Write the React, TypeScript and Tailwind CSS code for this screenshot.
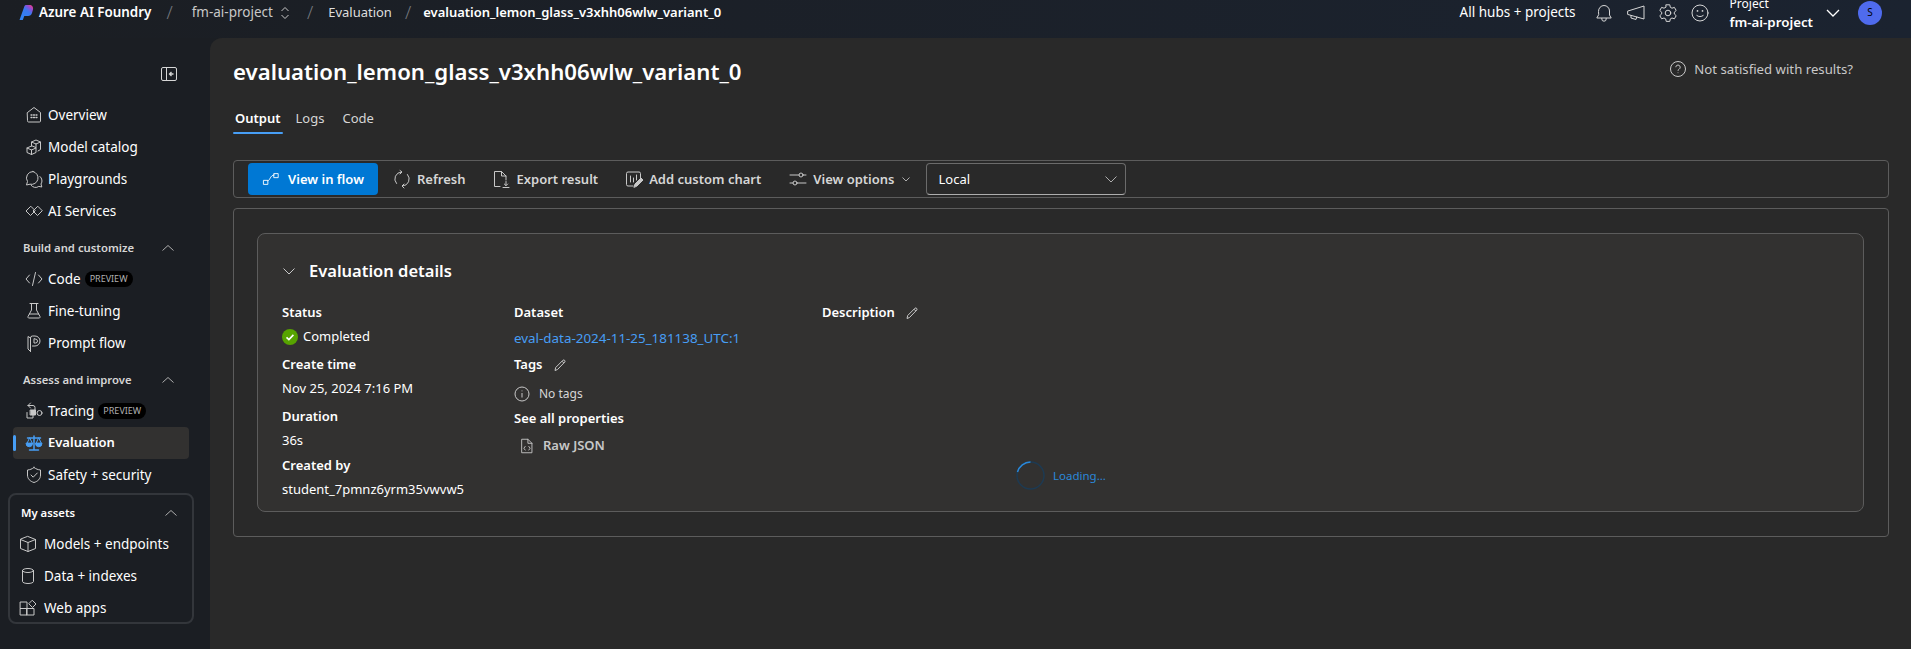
import React from "react";

const font = "font-['Noto_Sans',sans-serif]";

function Ic({ s = 20, className = "", children }: { s?: number; className?: string; children: React.ReactNode }) {
  return (
    <svg width={s} height={s} viewBox="0 0 20 20" fill="none" stroke="currentColor" strokeWidth={1} strokeLinecap="round" strokeLinejoin="round" className={"shrink-0 " + className}>
      {children}
    </svg>
  );
}

const icons: Record<string, React.ReactNode> = {
  home: <><path d="M3.500 7.500 10 2.500l6.500 5v8.500a1 1 0 0 1-1 1h-11a1 1 0 0 1-1-1z" /><path d="M7 10h1M9.500 10h1M12 10h1M7 12.500h1M9.500 12.500h1M12 12.500h1" strokeWidth={1.300} /></>,
  catalog: <><path d="M7.500 9 3 11v4.500l4.500 2 4.500-2V11z" /><path d="m3 11 4.500 2 4.500-2M7.500 13v4.500" /><path d="M7.500 9V5l4.500-2 4.500 2v7.500l-2.500 1.500" /><path d="m7.500 5 4.500 2 4.500-2M12 7v3" /></>,
  play: <><path d="M9 2.500a6.500 6.500 0 0 0-5.500 10L2.500 16l3.500-.8A6.500 6.500 0 1 0 9 2.500z" /><path d="M16 7.500a5.500 5.500 0 0 1 1 7.500l.8 3-3-.6a5.500 5.500 0 0 1-7.800-1.200" /></>,
  ai: <><path d="M6.500 5.500 2 10l4.500 4.500L11 10z" /><path d="M13.500 5.500 9 10l4.500 4.500L18 10z" /></>,
  code: <><path d="m5.500 6-3.500 4 3.500 4M14.500 6l3.500 4-3.500 4M11.500 3.500l-3 13" /></>,
  flask: <><path d="M6 2.500h8M7.500 2.500V9l-3.500 6.500a1 1 0 0 0 .9 1.500h10.200a1 1 0 0 0 .9-1.500L12.500 9V2.500M5.500 13h9" /></>,
  flow: <><path d="M6.500 18.500V5a2 2 0 0 1 2-2h2.500a5 5 0 0 1 0 10H8.500" /><path d="M6.500 5 4 3.500v12.500l2.500 2.500M10 6v4h1.500a2 2 0 0 0 0-4z" /></>,
  trace: <><path d="M6.500 2 4 4.500 6.500 7M4 4.500h5a2 2 0 0 1 2 2V9" /><rect x="6.500" y="9" width="5" height="5" fill="currentColor" /><path d="M3 11.500V17h6v-3" /><circle cx="15.500" cy="12" r="2.500" /></>,
  scale: <><path d="M10 3v13.500M5.500 17h9M3.500 5h13" strokeWidth={1.500} /><path d="M5.500 5 3 10.500h5zM14.500 5 12 10.500h5z" /><path d="M2 10.500a3 3 0 0 0 6.500 0zM11.500 10.500a3 3 0 0 0 6.500 0z" fill="currentColor" /></>,
  shield: <><path d="M10 2.500c2 1.500 4 2.300 6.500 2.500v5c0 3.800-2.500 6.300-6.500 7.500-4-1.200-6.500-3.700-6.500-7.500V5C6 4.800 8 4 10 2.500z" /><path d="m7 10 2.200 2.200L13.300 8" /></>,
  cube: <><path d="M10 2.500 17.500 5.500v9L10 17.500l-7.500-3v-9z" /><path d="m2.500 5.500 7.500 3 7.500-3M10 8.500v9" /></>,
  db: <><ellipse cx="10" cy="4.500" rx="5.500" ry="2" /><path d="M4.500 4.500v11c0 1.100 2.500 2 5.500 2s5.500-.9 5.500-2v-11" /></>,
  apps: <><rect x="2.500" y="4" width="6.500" height="6.500" /><rect x="2.500" y="10.500" width="6.500" height="6.500" /><rect x="9" y="10.500" width="7" height="6.500" /><path d="m14.500 2.500 3.500 3.500-3.500 3.500L11 6z" /></>,
};

function Item({ icon, label, badge, active, inset }: { icon: string; label: string; badge?: boolean; active?: boolean; inset?: boolean }) {
  return (
    <div className={"relative flex h-8 items-center rounded " + (inset ? "pl-[8px]" : "pl-[11px]") + (active ? " bg-[#323130] font-semibold" : "")}>
      {active && <span className="absolute left-0 top-2 h-4 w-[3px] rounded-sm bg-[#479ef5]" />}
      <Ic s={20} className={active ? "text-[#479ef5]" : "text-[#c8c8c8]"}>{icons[icon]}</Ic>
      <span className={(inset ? "ml-[6px] " : "ml-[4px] ") + (active ? "text-[13px]" : "text-[13.5px]") + " text-white"}>{label}</span>
      {badge && <span className="ml-1 flex h-4 items-center rounded-full bg-black px-[5px] text-[9px] text-[#b0b0b0]">PREVIEW</span>}
    </div>
  );
}

function Section({ label, white }: { label: string; white?: boolean }) {
  return (
    <div className="flex h-[30px] items-center justify-between pr-[14px]">
      <span className={"text-[11.3px] font-semibold " + (white ? "text-white" : "text-[#d6d6d6]")}>{label}</span>
      <svg width="14" height="14" viewBox="0 0 14 14" fill="none" stroke="#adadad"><path d="m1.500 9.500 5.500-5 5.500 5" /></svg>
    </div>
  );
}

function Sidebar() {
  return (
    <aside className="w-[210px] shrink-0 bg-[#1b1e23] pl-[13px] pr-[21px] pt-[29px]">
      <div className="flex h-[16px] justify-end">
        <svg width="16" height="14" viewBox="0 0 16 14" fill="none" stroke="#d6d6d6" className="mr-[12px]">
          <rect x=".5" y=".5" width="15" height="13" rx="1.500" />
          <path d="M5.500.5v13" />
          <path d="M12.500 7H8.500M10.500 5 8.500 7l2 2" strokeWidth="1.300" />
        </svg>
      </div>
      <div className="mt-[16px]">
        <Item icon="home" label="Overview" />
        <Item icon="catalog" label="Model catalog" />
        <Item icon="play" label="Playgrounds" />
        <Item icon="ai" label="AI Services" />
      </div>
      <div className="mt-[6px] pl-[10px]"><Section label="Build and customize" /></div>
      <Item icon="code" label="Code" badge />
      <Item icon="flask" label="Fine-tuning" />
      <Item icon="flow" label="Prompt flow" />
      <div className="mt-[6px] pl-[10px]"><Section label="Assess and improve" /></div>
      <Item icon="trace" label="Tracing" badge />
      <Item icon="scale" label="Evaluation" active />
      <Item icon="shield" label="Safety + security" />
      <div className="-mx-[5px] mt-[2px] h-[131px] rounded-lg border-2 border-[#33363b] pl-[11px] pt-[3px]">
        <div><Section label="My assets" white /></div>
        <div className="-ml-[11px]">
          <Item icon="cube" label="Models + endpoints" inset />
          <Item icon="db" label="Data + indexes" inset />
          <Item icon="apps" label="Web apps" inset />
        </div>
      </div>
    </aside>
  );
}

function Slash({ className }: { className: string }) {
  return <span className={"text-[18px] font-light text-[#75787e] " + className}>/</span>;
}

function TopBar() {
  return (
    <header className="h-[38px] shrink-0 overflow-hidden bg-linear-to-r from-[#1b1e23] to-[#1b2330] text-[13px] text-white">
      <div className="flex h-[25px] items-center">
        <div className="flex items-center pl-[19px]">
          <svg width="15" height="15" viewBox="0 0 15 15">
            <defs>
              <linearGradient id="lg1" x1="0" y1="1" x2="0.8" y2="0"><stop offset="0" stopColor="#2f86f5" /><stop offset="0.65" stopColor="#3a78f0" /><stop offset="0.85" stopColor="#8a4fd8" /><stop offset="1" stopColor="#d8409a" /></linearGradient>
            </defs>
            <path d="M.5 15 5.500 1C5.800.3 6.300 0 7 0h3.500C13 0 14.500 2 14 4.500l-1 3.500c-.5 2-2 3-4 3H5.300L3.800 15z" fill="url(#lg1)" />
          </svg>
          <span className="ml-[5px] text-[13.4px] font-semibold">Azure AI Foundry</span>
        </div>
        <Slash className="ml-[15px]" />
        <span className="ml-[19px] text-[13.5px] text-[#c8c8c8]">fm-ai-project</span>
        <svg width="12" height="16" viewBox="0 0 12 16" fill="none" stroke="#c8c8c8" className="ml-[6px]"><path d="m2.500 6 3.500-3.500L9.500 6M2.500 10 6 13.500 9.500 10" /></svg>
        <Slash className="ml-[16px]" />
        <span className="ml-[15px] text-[#dedede]">Evaluation</span>
        <Slash className="ml-[13px]" />
        <span className="ml-[12px] font-semibold">evaluation_lemon_glass_v3xhh06wlw_variant_0</span>
        <div className="ml-auto flex h-[25px] items-center pr-[29px]">
          <span className="text-[13.5px]">All hubs + projects</span>
          <div className="ml-[18px] flex items-center gap-[12px] text-[#d6d6d6]">
            <Ic s={20}>
              <path d="M4.500 8a5.500 5.500 0 0 1 11 0v4l1.700 3H2.800l1.700-3z" /><path d="M7.800 15.500v.5a2.200 2.200 0 0 0 4.400 0v-.5" />
            </Ic>
            <Ic s={20}>
              <path d="M2 8 18 3v13l-9-2.500-7-2z" /><path d="M5 12.500V15l5 1.500.7-2.500" />
            </Ic>
            <Ic s={20}>
              <path d="M8.200 1.800h3.600l.5 2.500 1.700.9 2.400-.8 1.800 3.100-1.900 1.700v1.800l1.900 1.700-1.800 3.100-2.400-.8-1.700.9-.5 2.500H8.200l-.5-2.500-1.700-.9-2.400.8-1.800-3.100 1.900-1.700V9.200L1.800 7.500l1.800-3.100 2.400.8 1.700-.9z" /><circle cx="10" cy="10" r="2.800" />
            </Ic>
            <Ic s={20}>
              <circle cx="10" cy="10" r="8" /><path d="M6.800 12.500c1.800 1.500 4.600 1.500 6.400 0" /><path d="M7.500 7.800v.2M12.500 7.800v.2" strokeWidth={1.700} />
            </Ic>
          </div>
          <div className="ml-[20px] -mt-[6px] flex flex-col self-start leading-[19px]">
            <span className="text-[12px]">Project</span>
            <span className="text-[13.3px] font-semibold">fm-ai-project</span>
          </div>
          <svg width="16" height="16" viewBox="0 0 16 16" fill="none" stroke="#fff" strokeWidth="1.300" className="ml-[12px]"><path d="m2 5 6 6 6-6" /></svg>
          <div className="ml-[17px] flex h-6 w-6 items-center justify-center rounded-full bg-[#4f6bed] text-[10px] text-black">S</div>
        </div>
      </div>
    </header>
  );
}

function ToolButton({ icon, label, gapLeft }: { icon: React.ReactNode; label: string; gapLeft: string }) {
  return (
    <div className={"flex h-8 items-center text-[13px] font-semibold text-[#d6d6d6] " + gapLeft}>
      {icon}
      <span className="ml-[5px] pt-[2px]">{label}</span>
    </div>
  );
}

function Toolbar() {
  return (
    <div className="flex h-[38px] items-center rounded border border-[#5c5c5c] pl-[14px]">
      <div className="flex h-8 w-[130px] items-center justify-center rounded bg-[#0078d4] text-[13px] font-semibold text-white">
        <Ic s={18}><rect x="2" y="11.500" width="4.500" height="4.500" /><rect x="13.500" y="4" width="4.500" height="4.500" /><path d="M6.500 12c3-.5 2-6 7-6.500" /></Ic>
        <span className="ml-[8px] pt-[2px]">View in flow</span>
      </div>
      <ToolButton gapLeft="ml-[14px]" label="Refresh" icon={<Ic s={20} className="text-[#c8c8c8]"><path d="M4.500 14.500a7 7 0 0 1 5-11.500M15.500 5.500a7 7 0 0 1-5 11.500" /><path d="M8 1.500 10 3 8 5M12 15l-2 2 2 2" /></Ic>} />
      <ToolButton gapLeft="ml-[26px]" label="Export result" icon={<Ic s={20} className="text-[#c8c8c8]"><path d="M9 17.500H3.500v-15h7L15 7v4M10.500 2.500V7H15" /><path d="M15 12.500v4M13.300 15l1.700 1.700 1.700-1.700M12 18.500h6" /></Ic>} />
      <ToolButton gapLeft="ml-[26px]" label="Add custom chart" icon={<Ic s={20} className="text-[#c8c8c8]"><path d="M9 17H4a1.500 1.500 0 0 1-1.500-1.500v-11A1.500 1.500 0 0 1 4 3h11a1.500 1.500 0 0 1 1.500 1.500V10" /><path d="M6.500 7v6M9.500 9v4M12.500 6v5" /><path d="m10 18 1-3 6-6 2 2-6 6z" fill="currentColor" /></Ic>} />
      <ToolButton gapLeft="ml-[27px]" label="View options" icon={<Ic s={20} className="text-[#c8c8c8]"><path d="M2 6h9M15 6h3M2 14h3M9 14h9" /><circle cx="13" cy="6" r="2" /><circle cx="7" cy="14" r="2" /></Ic>} />
      <svg width="10" height="10" viewBox="0 0 10 10" fill="none" stroke="#adadad" className="ml-[6px]"><path d="m1.500 3.500 3.500 3.500 3.500-3.500" /></svg>
      <div className="ml-[15px] flex h-8 w-[200px] items-center justify-between rounded border border-[#6b6b6b] border-b-[#adadad] pl-[12px] pr-[7px] text-[13px] text-white">
        <span className="pt-[2px]">Local</span>
        <svg width="14" height="14" viewBox="0 0 14 14" fill="none" stroke="#adadad"><path d="m1.500 4.500 5.500 5.500 5.500-5.500" /></svg>
      </div>
    </div>
  );
}

function Label({ children, className = "" }: { children: React.ReactNode; className?: string }) {
  return <div className={"flex h-6 items-center text-[13px] font-semibold text-white " + className}>{children}</div>;
}
function Value({ children }: { children: React.ReactNode }) {
  return <div className="flex h-6 items-center text-[13px] text-white">{children}</div>;
}
const Pencil = () => (
  <svg width="14" height="14" viewBox="0 0 14 14" fill="none" stroke="#c8c8c8" className="ml-[10px]"><path d="M2 12.500l.7-3L10 2.200a1.300 1.300 0 0 1 1.800 1.800L4.500 11.500z" /><path d="m9 3.200 1.800 1.800" /></svg>
);

function Details() {
  return (
    <div className="relative ml-[23px] mr-[24px] mt-[24px] h-[279px] rounded-lg border border-[#5c5c5c] bg-[#323130] pl-[24px] pt-[24px]">
      <div className="flex h-[26px] items-center">
        <svg width="14" height="14" viewBox="0 0 14 14" fill="none" stroke="#c8c8c8"><path d="m1.500 4.500 5.500 5.500 5.500-5.500" /></svg>
        <span className="ml-[13px] text-[16.500px] font-semibold text-white">Evaluation details</span>
      </div>
      <div className="mt-[17px] flex">
        <div className="w-[232px]">
          <Label>Status</Label>
          <Value><svg width="16" height="16" viewBox="0 0 16 16" className="mr-[5px]"><circle cx="8" cy="8" r="8" fill="#57a300" /><path d="m4.500 8.300 2.400 2.300 4.500-4.700" fill="none" stroke="#fff" strokeWidth="1.600" /></svg>Completed</Value>
          <Label className="mt-[4px]">Create time</Label>
          <Value>Nov 25, 2024 7:16 PM</Value>
          <Label className="mt-[4px]">Duration</Label>
          <Value>36s</Value>
          <Label className="mt-[1px]">Created by</Label>
          <Value>student_7pmnz6yrm35vwvw5</Value>
        </div>
        <div className="w-[308px]">
          <Label>Dataset</Label>
          <div className="mt-[1px] flex h-6 items-center text-[13.400px] text-[#479ef5]">eval-data-2024-11-25_181138_UTC:1</div>
          <Label className="mt-[3px]">Tags<Pencil /></Label>
          <div className="mt-[5px] flex h-6 items-center text-[12px] text-[#d6d6d6]">
            <svg width="16" height="16" viewBox="0 0 16 16" fill="none" stroke="#c8c8c8"><circle cx="8" cy="8" r="7" /><path d="M8 7v4.500M8 4.500v.8" /></svg>
            <span className="ml-[9px]">No tags</span>
          </div>
          <Label className="mt-[1px]">See all properties</Label>
          <div className="mt-[3px] flex h-6 items-center pl-[4px] text-[13px] font-semibold text-[#c8c8c8]">
            <Ic s={18}><path d="M4.500 2.500H11L15.500 7v10.500h-11zM11 2.500V7h4.500" /><path d="M8 10.500 6.500 12.500 8 14.500M12 10.500l1.500 2-1.500 2" /></Ic>
            <span className="ml-[7px]">Raw JSON</span>
          </div>
        </div>
        <div>
          <Label>Description<Pencil /></Label>
        </div>
      </div>
      <div className="absolute left-[758px] top-[227px] flex items-center">
        <svg width="29" height="29" viewBox="0 0 29 29" fill="none" strokeWidth="1.500">
          <circle cx="14.500" cy="14.500" r="13.500" stroke="#1d3a52" />
          <path d="M1.500 11A13.500 13.500 0 0 1 14.500 1" stroke="#2b88d8" />
        </svg>
        <span className="ml-[8px] text-[11.500px] text-[#2b88d8]">Loading...</span>
      </div>
    </div>
  );
}

export default function App() {
  return (
    <div className={"flex h-[649px] w-[1911px] flex-col overflow-hidden bg-[#1b1e23] " + font}>
      <TopBar />
      <div className="flex min-h-0 flex-1">
        <Sidebar />
        <main className="flex-1 rounded-tl-xl bg-[#292929] pl-[23px] pr-[22px] pt-[18px]">
          <div className="flex h-[32px] items-center justify-between">
            <h1 className="text-[22.200px] font-semibold text-white">evaluation_lemon_glass_v3xhh06wlw_variant_0</h1>
            <div className="mb-[5px] flex items-center pr-[36px] text-[13.200px] text-[#c8c8c8]">
              <svg width="16" height="16" viewBox="0 0 16 16" fill="none" stroke="#c8c8c8"><circle cx="8" cy="8" r="7.500" /><path d="M5.800 6.200a2.200 2.200 0 1 1 3.400 1.900c-.8.500-1.200.9-1.200 1.700M8 11.500v.6" /></svg>
              <span className="ml-[8px]">Not satisfied with results?</span>
            </div>
          </div>
          <div className="mt-[19px] flex h-[30px] items-start pl-[2px] text-[13px]">
            <div className="relative h-[28px] pt-[2px] font-semibold text-white">
              Output
              <span className="absolute -left-[2px] -right-[2px] bottom-[1px] h-[2px] rounded bg-[#479ef5]" />
            </div>
            <div className="ml-[15px] pt-[2px] text-[#d6d6d6]">Logs</div>
            <div className="ml-[18px] pt-[2px] text-[#d6d6d6]">Code</div>
          </div>
          <div className="mt-[23px]"><Toolbar /></div>
          <div className="mt-[10px] h-[329px] overflow-hidden rounded border border-[#5c5c5c]"><Details /></div>
        </main>
      </div>
    </div>
  );
}
